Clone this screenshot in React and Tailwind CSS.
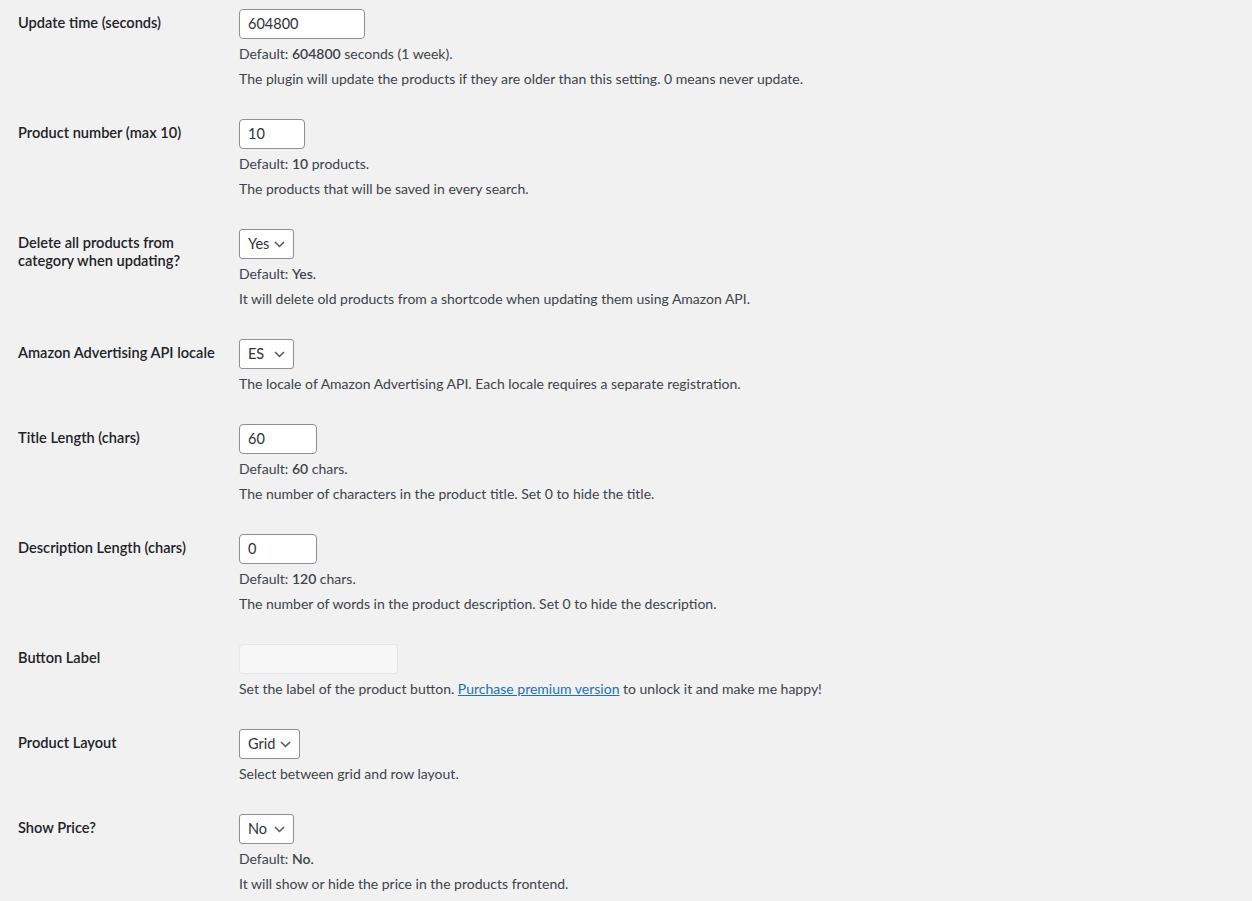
import React from "react";

const Chevron = () => (
  <svg width="11" height="7" viewBox="0 0 11 7" className="shrink-0">
    <polyline points="1,1 5.5,5.5 10,1" fill="none" stroke="#50575e" strokeWidth="1.5" />
  </svg>
);

function TextInput({ value, width }) {
  return (
    <div
      className={`h-[30px] ${width} rounded-[4px] border border-[#8c8f94] bg-white px-[8px] flex items-center text-[14.5px] text-[#2c3338]`}
    >
      {value}
    </div>
  );
}

function Select({ value, width }) {
  return (
    <div
      className={`h-[30px] ${width} rounded-[3px] border border-[#8c8f94] bg-white pl-[8px] pr-[8px] flex items-center justify-between text-[14.5px] text-[#2c3338]`}
    >
      <span>{value}</span>
      <Chevron />
    </div>
  );
}

function Desc({ children }) {
  return <p className="mt-[5px] leading-[20px] text-[14px] text-[#3c434a] whitespace-nowrap">{children}</p>;
}

function Row({ label, children }) {
  return (
    <div className="flex">
      <div className="w-[239px] shrink-0 pl-[18px] pt-[20px] text-[14.6px] leading-[18px] font-semibold text-[#1d2327] whitespace-nowrap">
        {label}
      </div>
      <div className="py-[15px]">{children}</div>
    </div>
  );
}

export default function App() {
  return (
    <div className="min-h-screen w-full bg-[#f1f1f1] font-['Lato',sans-serif] overflow-hidden">
      <div className="-mt-[6px]">
        <Row label="Update time (seconds)">
          <TextInput value="604800" width="w-[126px]" />
          <Desc>
            Default: <b className="font-semibold">604800</b> seconds (1 week).
          </Desc>
          <Desc>The plugin will update the products if they are older than this setting. 0 means never update.</Desc>
        </Row>

        <Row label="Product number (max 10)">
          <TextInput value="10" width="w-[66px]" />
          <Desc>
            Default: <b className="font-semibold">10</b> products.
          </Desc>
          <Desc>The products that will be saved in every search.</Desc>
        </Row>

        <Row
          label={
            <>
              Delete all products from
              <br />
              category when updating?
            </>
          }
        >
          <Select value="Yes" width="w-[55px]" />
          <Desc>
            Default: <b className="font-semibold">Yes.</b>
          </Desc>
          <Desc>It will delete old products from a shortcode when updating them using Amazon API.</Desc>
        </Row>

        <Row label="Amazon Advertising API locale">
          <Select value="ES" width="w-[55px]" />
          <Desc>The locale of Amazon Advertising API. Each locale requires a separate registration.</Desc>
        </Row>

        <Row label="Title Length (chars)">
          <TextInput value="60" width="w-[78px]" />
          <Desc>
            Default: <b className="font-semibold">60</b> chars.
          </Desc>
          <Desc>The number of characters in the product title. Set 0 to hide the title.</Desc>
        </Row>

        <Row label="Description Length (chars)">
          <TextInput value="0" width="w-[78px]" />
          <Desc>
            Default: <b className="font-semibold">120</b> chars.
          </Desc>
          <Desc>The number of words in the product description. Set 0 to hide the description.</Desc>
        </Row>

        <Row label="Button Label">
          <div className="h-[30px] w-[159px] rounded-[4px] border border-[#e6e6e7] bg-[#f7f7f7]" />
          <Desc>
            Set the label of the product button.{" "}
            <a href="#" className="text-[#2271b1] underline">
              Purchase premium version
            </a>{" "}
            to unlock it and make me happy!
          </Desc>
        </Row>

        <Row label="Product Layout">
          <Select value="Grid" width="w-[61px]" />
          <Desc>Select between grid and row layout.</Desc>
        </Row>

        <Row label="Show Price?">
          <Select value="No" width="w-[55px]" />
          <Desc>
            Default: <b className="font-semibold">No.</b>
          </Desc>
          <Desc>It will show or hide the price in the products frontend.</Desc>
        </Row>
      </div>
    </div>
  );
}
